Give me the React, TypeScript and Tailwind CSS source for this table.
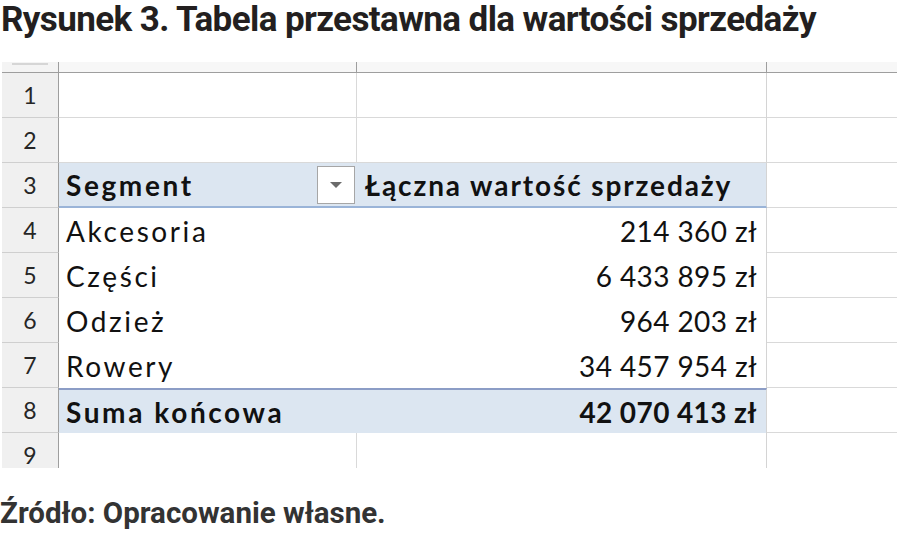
import React from "react";

const cellFont = { fontFamily: "Lato, 'Open Sans', sans-serif" };
const headFont = { fontFamily: "Roboto, 'Liberation Sans', sans-serif" };

type Row = {
  n: number;
  kind: "empty" | "head" | "data" | "total";
  label?: string;
  value?: string;
};

const rows: Row[] = [
  { n: 1, kind: "empty" },
  { n: 2, kind: "empty" },
  { n: 3, kind: "head", label: "Segment", value: "Łączna wartość sprzedaży" },
  { n: 4, kind: "data", label: "Akcesoria", value: "214 360 zł" },
  { n: 5, kind: "data", label: "Części", value: "6 433 895 zł" },
  { n: 6, kind: "data", label: "Odzież", value: "964 203 zł" },
  { n: 7, kind: "data", label: "Rowery", value: "34 457 954 zł" },
  { n: 8, kind: "total", label: "Suma końcowa", value: "42 070 413 zł" },
];

const RowNum = ({ n }: { n: number }) => (
  <div className="w-[57px] ml-[2px] shrink-0 flex items-center justify-center bg-[#f0f0f0] border-r border-[#9e9e9e] border-b border-b-[#cfcfcf] text-[23px] text-[#262626]">
    {n}
  </div>
);

const PivotRow = ({ row }: { row: Row }) => {
  const blue = row.kind === "head" || row.kind === "total";
  let aCls = "w-[298px] shrink-0 flex items-center pl-[7px] tracking-[2.6px]";
  let bCls =
    "w-[410px] shrink-0 flex items-center pr-[9px] border-r border-[#d4d4d4]";
  if (row.kind === "head") {
    bCls += " pl-[8px] tracking-[1.9px]";
  } else {
    bCls += " justify-end tracking-[0.4px]";
  }
  if (row.kind === "empty") {
    aCls += " border-r border-b border-[#d9d9d9]";
    bCls += " border-b border-b-[#d9d9d9]";
  }
  if (row.kind === "head") {
    aCls += " bg-[#dce6f1] border-b-2 border-[#9ab4d8]";
    bCls += " bg-[#dce6f1] border-b-2 border-b-[#9ab4d8]";
  }
  if (row.kind === "total") {
    aCls += " bg-[#dce6f1] border-t-2 border-[#8c9dc6]";
    bCls += " bg-[#dce6f1] border-t-2 border-t-[#8c9dc6]";
  }
  return (
    <div className="flex h-[45px]">
      <RowNum n={row.n} />
      <div className={`${aCls} ${blue ? "font-bold" : ""} text-[28px] text-[#111]`}>
        <span className="flex-1">{row.label}</span>
        {row.kind === "head" && (
          <span className="w-[38px] h-[38px] mr-[2px] bg-white border border-[#a6a6a6] flex items-center justify-center">
            <svg width="14" height="8" viewBox="0 0 14 8">
              <path d="M1 1h12L7 7z" fill="#6b6b6b" />
            </svg>
          </span>
        )}
      </div>
      <div className={`${bCls} ${blue ? "font-bold" : ""} text-[28px] text-[#111]`}>
        {row.value}
      </div>
      <div className="flex-1 border-b border-[#d9d9d9]" />
    </div>
  );
};

export default function App() {
  return (
    <div className="w-[897px] h-[533px] bg-white overflow-hidden" style={cellFont}>
      <div className="h-[62px] pl-[1px]" style={headFont}>
        <h1 className="text-[35px] leading-[40px] font-bold text-[#231f20] tracking-[-0.6px]">
          Rysunek 3. Tabela przestawna dla wartości sprzedaży
        </h1>
      </div>

      <div className="flex h-[11px]">
        <div className="w-[57px] ml-[2px] shrink-0 bg-[#f4f4f4] border-r border-b border-[#9e9e9e] flex items-start justify-center">
          <div className="w-[36px] h-[2px] mt-[1px] bg-[#d6d6d6]" />
        </div>
        <div className="w-[298px] shrink-0 bg-[#f7f7f7] border-r border-b border-[#9e9e9e]" />
        <div className="w-[410px] shrink-0 bg-[#f7f7f7] border-r border-b border-[#9e9e9e]" />
        <div className="flex-1 bg-[#f7f7f7] border-b border-[#9e9e9e]" />
      </div>

      {rows.map((r) => (
        <PivotRow key={r.n} row={r} />
      ))}

      <div className="flex h-[35px] overflow-hidden">
        <div className="w-[57px] ml-[2px] shrink-0 flex items-start justify-center pt-[5px] bg-[#f0f0f0] border-r border-[#9e9e9e] text-[23px] text-[#262626]">
          9
        </div>
        <div className="w-[298px] shrink-0 border-r border-[#d9d9d9]" />
        <div className="w-[410px] shrink-0 border-r border-[#d4d4d4]" />
        <div className="flex-1" />
      </div>

      <div className="pt-[29px]" style={headFont}>
        <p className="text-[29.5px] leading-[32px] font-bold text-[#333]">
          Źródło: Opracowanie własne.
        </p>
      </div>
    </div>
  );
}
